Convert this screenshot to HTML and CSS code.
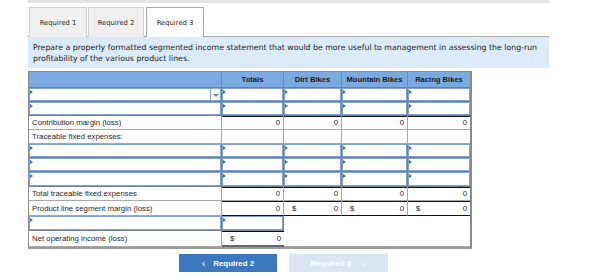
FILE: index.html
```html
<!DOCTYPE html>
<html>
<head>
<meta charset="utf-8">
<link rel="stylesheet" href="styles.css">
</head>
<body>
<div class="wrap">
  <div class="topbar"></div>
  <div class="tabs">
    <div class="tab t1">Required 1</div>
    <div class="tab t2">Required 2</div>
    <div class="tab t3 active">Required 3</div>
  </div>
  <div class="instr">Prepare a properly formatted segmented income statement that would be more useful to management in assessing the long-run profitability of the various product lines.</div>
  <table class="stmt">
    <colgroup>
      <col class="c-label"><col class="c-tot"><col class="c-dirt"><col class="c-mtn"><col class="c-race">
    </colgroup>
    <thead>
      <tr class="hd"><th></th><th>Totals</th><th>Dirt Bikes</th><th>Mountain Bikes</th><th>Racing Bikes</th></tr>
    </thead>
    <tbody>
      <tr class="r14"><td class="in sel"><span class="dd"></span></td><td class="in"></td><td class="in"></td><td class="in"></td><td class="in"></td></tr>
      <tr class="r14"><td class="in"></td><td class="in"></td><td class="in"></td><td class="in"></td><td class="in"></td></tr>
      <tr class="r14"><td class="lbl">Contribution margin (loss)</td><td class="num tb">0</td><td class="num tb">0</td><td class="num tb">0</td><td class="num tb">0</td></tr>
      <tr class="r14"><td class="lbl">Traceable fixed expenses:</td><td></td><td></td><td></td><td></td></tr>
      <tr class="r14"><td class="in"></td><td class="in"></td><td class="in"></td><td class="in"></td><td class="in"></td></tr>
      <tr class="r14"><td class="in"></td><td class="in"></td><td class="in"></td><td class="in"></td><td class="in"></td></tr>
      <tr class="r15"><td class="in"></td><td class="in"></td><td class="in"></td><td class="in"></td><td class="in"></td></tr>
      <tr class="r14"><td class="lbl">Total traceable fixed expenses</td><td class="num tb">0</td><td class="num tb">0</td><td class="num tb">0</td><td class="num tb">0</td></tr>
      <tr class="r15"><td class="lbl">Product line segment margin (loss)</td><td class="num tb bb">0</td><td class="num tb bb"><span class="cur">$</span>0</td><td class="num tb bb"><span class="cur">$</span>0</td><td class="num tb bb"><span class="cur">$</span>0</td></tr>
      <tr class="r15"><td class="in"></td><td class="in"></td><td class="blank" colspan="3" rowspan="2"></td></tr>
      <tr class="r16"><td class="lbl">Net operating income (loss)</td><td class="num tb dbl"><span class="cur">$</span>0</td></tr>
    </tbody>
  </table>
  <div class="nav">
    <button class="btn prev"><span class="chev">&#8249;</span>Required 2</button>
    <button class="btn next">Required 3<span class="chev">&#8250;</span></button>
  </div>
</div>
</body>
</html>
```
FILE: styles.css
```css
* { box-sizing: border-box; }
body { margin: 0; background: #fff; font-family: "Liberation Sans", Arial, sans-serif; color: #222; }
.wrap { margin-left: 28px; width: 521px; }
.topbar { height: 3px; background: #e4e4e4; }
.tabs { display: flex; gap: 1px; margin-top: 4px; padding-left: 1px; position: relative; z-index: 1; margin-bottom: -1px; }
.tab { height: 30px; display: flex; align-items: center; justify-content: center; font-family: Verdana, "DejaVu Sans", sans-serif; font-size: 6.8px; color: #1e1e1e; background: #f0f0f0; border: 1px solid #d2d2d2; border-bottom: none; }
.t1 { width: 58px; }
.t2 { width: 56px; }
.t3 { width: 58px; margin-left: 1px; }
.tab.active { background: #fff; border: 1px solid #a9a9a9; border-bottom: none; }
.instr { background: #dcebf9; border-top: 1px solid #a9a9a9; padding: 5px 5px 4px 5px; height: 32px; font-family: Verdana, "DejaVu Sans", sans-serif; font-size: 7.8px; line-height: 11px; color: #222; }
.stmt { margin-top: 3px; border-collapse: separate; border-spacing: 0; table-layout: fixed; width: 443px; border: 1px solid #8a8a8a; border-right-width: 2px; border-bottom-width: 2px; border-bottom-color: #9a9a9a; }
.c-label { width: 193px; }
.c-tot { width: 62px; }
.c-dirt { width: 58px; }
.c-mtn { width: 66px; }
.c-race { width: 62px; }
.stmt th, .stmt td { padding: 0; border-right: 1px solid #a6a6a6; border-bottom: 1px solid #a6a6a6; font-size: 7.8px; }
.stmt th:last-child, .stmt td:last-child { border-right: none; }
.hd th { height: 16px; background: #7aaae0; font-weight: bold; font-size: 7.6px; color: #1b1b1b; border-color: #7e8a98; border-bottom: 1px solid #6f7f93; vertical-align: middle; text-align: center; padding-bottom: 1px; }
.hd th:first-child { border-right: 1px solid #7e8a98; }
.r14 td { height: 14px; }
.r15 td { height: 15px; }
.r16 td { height: 16px; }
.lbl { padding-left: 3px !important; color: #2a2a2a; white-space: nowrap; }
.num { text-align: right; padding-right: 3px !important; color: #2a2a2a; position: relative; }
.cur { float: left; padding-left: 8px; }
.tb { box-shadow: inset 0 1px 0 #111; }
.bb { border-bottom: 1px solid #111 !important; }
.dbl { border-bottom: 2px solid #666 !important; }
.in { background: #fff; position: relative; box-shadow: inset 0 0 0 1px #82a3d0; border-color: #6e7f96 !important; }
.in::before { content: ""; position: absolute; left: 1px; top: 2px; border-left: 3px solid #2c74c9; border-top: 2px solid transparent; border-bottom: 2px solid transparent; }
.sel .dd { position: absolute; right: 1px; top: 1px; bottom: 1px; width: 10px; border-left: 1px solid #82a3d0; }
.sel .dd::after { content: ""; position: absolute; left: 2px; top: 5px; border-top: 3px solid #6a86ad; border-left: 3px solid transparent; border-right: 3px solid transparent; }
.blank { background: #fff; }
.nav { display: flex; gap: 12px; margin-top: 5px; margin-left: 151px; }
.btn { width: 98px; height: 18px; border: none; padding: 0; font-family: "Liberation Sans", Arial, sans-serif; font-weight: bold; font-size: 7.9px; color: #fff; display: flex; align-items: center; justify-content: center; }
.prev { background: #3b78bd; }
.next { background: #d9e5f2; width: 99px; }
.prev .chev { margin-right: 8px; font-size: 10px; font-weight: normal; }
.next .chev { margin-left: 12px; font-size: 10px; font-weight: normal; }
```
